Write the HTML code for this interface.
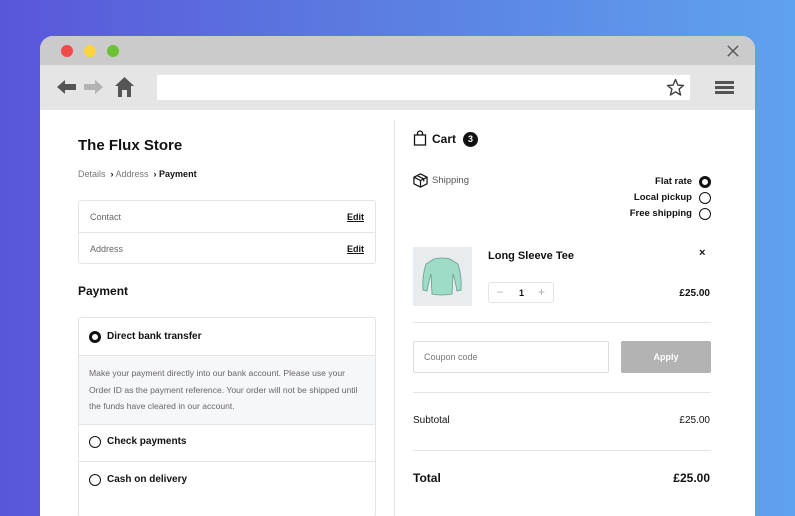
<!DOCTYPE html>
<html><head><style>
*{margin:0;padding:0;box-sizing:border-box}
body{width:795px;height:500px;overflow:hidden;background:linear-gradient(90deg,#5a56d9 0%,#5b7fe2 50%,#5fa2ee 100%);font-family:"Liberation Sans",sans-serif;color:#111;position:relative}
.win{position:absolute;left:40px;top:36px;width:715px;height:480px;background:#fff;border-radius:13px 13px 0 0;overflow:hidden}
.tb{height:29px;background:#cbcbcb;position:relative}
.dot{position:absolute;top:9px;width:12px;height:12px;border-radius:50%}
.tool{height:45px;background:#e5e5e5;position:relative}
.addr{position:absolute;left:117px;top:10px;width:533px;height:25px;background:#fff}
.a{position:absolute}
.b{font-weight:bold}
.box{position:absolute;border:1px solid #e4e4e4;border-radius:3px}
.row{position:absolute;left:0;right:0;border-top:1px solid #e4e4e4}
.rad{position:absolute;width:12px;height:12px;border:1.5px solid #111;border-radius:50%}
.rad.on{border:3.5px solid #111}
.hr{position:absolute;left:373px;width:298px;height:1px;background:#e4e4e4}
</style></head><body>
<div class="win">
 <div class="tb">
  <div class="dot" style="left:21px;background:#ee4b4b"></div>
  <div class="dot" style="left:44px;background:#fbd43f"></div>
  <div class="dot" style="left:67px;background:#6cc234"></div>
  <svg class="a" style="left:687px;top:9px" width="12" height="12" viewBox="0 0 14 14"><path d="M1 1L13 13M13 1L1 13" stroke="#555" stroke-width="1.6"/></svg>
 </div>
 <div class="tool">
  <svg class="a" style="left:17px;top:14px" width="20" height="16" viewBox="0 0 20 16"><path d="M0 8L8 1V5H19V11H8V15Z" fill="#555"/></svg>
  <svg class="a" style="left:43px;top:14px" width="20" height="16" viewBox="0 0 20 16"><path d="M20 8L12 1V5H1V11H12V15Z" fill="#b3b3b3"/></svg>
  <svg class="a" style="left:75px;top:12px" width="19" height="20" viewBox="0 0 19 20"><path d="M9.5 0L19 9H16V20H12V13H7V20H3V9H0Z" fill="#555"/></svg>
  <div class="addr"></div>
  <svg class="a" style="left:626px;top:13px" width="19" height="19" viewBox="0 0 24 24"><path d="M12 2L15 9L22 9.5L16.5 14L18.5 21.5L12 17.5L5.5 21.5L7.5 14L2 9.5L9 9Z" fill="none" stroke="#444" stroke-width="1.8" stroke-linejoin="round"/></svg>
  <div class="a" style="left:675px;top:16px;width:19px;height:3px;background:#555"></div>
  <div class="a" style="left:675px;top:21px;width:19px;height:3px;background:#555"></div>
  <div class="a" style="left:675px;top:26px;width:19px;height:3px;background:#555"></div>
 </div>
 <div class="a" style="left:354px;top:84px;width:1px;height:400px;background:#e6e6e6"></div>

 <div class="a b" style="left:38px;top:101px;font-size:15px">The Flux Store</div>
 <div class="a" style="left:38px;top:133px;font-size:9px;color:#777">Details&nbsp; <b style="color:#111">&rsaquo;</b> Address&nbsp; <b style="color:#111">&rsaquo; Payment</b></div>

 <div class="box" style="left:38px;top:164px;width:298px;height:64px">
  <div class="a" style="left:11px;top:11px;font-size:9px;color:#666">Contact</div>
  <div class="a b" style="right:11px;top:11px;font-size:9px;text-decoration:underline">Edit</div>
  <div class="row" style="top:31px"></div>
  <div class="a" style="left:11px;top:43px;font-size:9px;color:#666">Address</div>
  <div class="a b" style="right:11px;top:43px;font-size:9px;text-decoration:underline">Edit</div>
 </div>

 <div class="a b" style="left:38px;top:248px;font-size:12px">Payment</div>
 <div class="box" style="left:38px;top:281px;width:298px;height:200px">
  <div class="rad on" style="left:10px;top:13px"></div>
  <div class="a b" style="left:28px;top:13px;font-size:10px">Direct bank transfer</div>
  <div class="a" style="left:0;right:0;top:37px;height:69px;background:#f6f7f9;border-top:1px solid #e4e4e4"></div>
  <div class="a" style="left:10px;top:47px;width:279px;font-size:8.6px;line-height:16.5px;color:#666">Make your payment directly into our bank account. Please use your<br>Order ID as the payment reference. Your order will not be shipped until<br>the funds have cleared in our account.</div>
  <div class="row" style="top:106px"></div>
  <div class="rad" style="left:10px;top:118px"></div>
  <div class="a b" style="left:28px;top:118px;font-size:10px">Check payments</div>
  <div class="row" style="top:143px"></div>
  <div class="rad" style="left:10px;top:156px"></div>
  <div class="a b" style="left:28px;top:156px;font-size:10px">Cash on delivery</div>
 </div>

 <svg class="a" style="left:373px;top:94px" width="14" height="16" viewBox="0 0 14 16"><path d="M1.5 5H12.5V15H1.5Z M4.5 5V3.5A2.5 2.5 0 0 1 9.5 3.5V5" fill="none" stroke="#111" stroke-width="1.3"/></svg>
 <div class="a b" style="left:392px;top:96px;font-size:12px">Cart</div>
 <div class="a b" style="left:423px;top:96px;width:15px;height:15px;border-radius:50%;background:#111;color:#fff;font-size:9px;text-align:center;line-height:15px">3</div>

 <svg class="a" style="left:373px;top:137px" width="15" height="15" viewBox="0 0 16 16"><path d="M8 1L15 4.5V11.5L8 15L1 11.5V4.5Z M1 4.5L8 8L15 4.5 M8 8V15 M4.5 2.8L11.5 6.3V9" fill="none" stroke="#111" stroke-width="1.3" stroke-linejoin="round"/></svg>
 <div class="a" style="left:392px;top:139px;font-size:9.5px;color:#555">Shipping</div>
 <div class="a b" style="right:63px;top:140px;font-size:9.5px">Flat rate</div>
 <div class="rad on" style="left:659px;top:140px"></div>
 <div class="a b" style="right:63px;top:156px;font-size:9.5px">Local pickup</div>
 <div class="rad" style="left:659px;top:156px"></div>
 <div class="a b" style="right:63px;top:172px;font-size:9.5px">Free shipping</div>
 <div class="rad" style="left:659px;top:172px"></div>

 <div class="a" style="left:373px;top:211px;width:59px;height:59px;background:#e8ecef"></div>
 <svg class="a" style="left:380px;top:220px" width="44" height="42" viewBox="0 0 44 42"><path d="M14 3Q22 1 30 3L38 8Q42 20 41 34L37 35Q35 24 33 18L32 38Q22 40 12 38L11 18Q9 24 7 35L3 34Q2 20 6 8Z" fill="#9fdcc8" stroke="#6a9b8c" stroke-width="0.8"/></svg>
 <div class="a b" style="left:448px;top:214px;font-size:11px">Long Sleeve Tee</div>
 <div class="a b" style="left:659px;top:211px;font-size:11px">×</div>
 <div class="box" style="left:448px;top:246px;width:66px;height:21px">
  <div class="a" style="left:8px;top:3px;font-size:11px;color:#aaa">–</div>
  <div class="a b" style="left:30px;top:5px;font-size:9px">1</div>
  <div class="a" style="left:49px;top:2px;font-size:12px;color:#aaa">+</div>
 </div>
 <div class="a b" style="right:45px;top:252px;font-size:10px">£25.00</div>

 <div class="hr" style="top:286px"></div>
 <div class="a" style="left:373px;top:305px;width:196px;height:32px;border:1px solid #ddd;border-radius:2px"></div>
 <div class="a" style="left:384px;top:316px;font-size:9px;color:#777">Coupon code</div>
 <div class="a b" style="left:581px;top:305px;width:90px;height:32px;background:#b3b3b3;color:#fff;font-size:9px;text-align:center;line-height:32px;border-radius:2px">Apply</div>

 <div class="hr" style="top:356px"></div>
 <div class="a" style="left:373px;top:379px;font-size:10px">Subtotal</div>
 <div class="a" style="right:45px;top:379px;font-size:10px">£25.00</div>
 <div class="hr" style="top:414px"></div>
 <div class="a b" style="left:373px;top:435px;font-size:12px">Total</div>
 <div class="a b" style="right:45px;top:435px;font-size:12px">£25.00</div>
</div>
</body></html>
